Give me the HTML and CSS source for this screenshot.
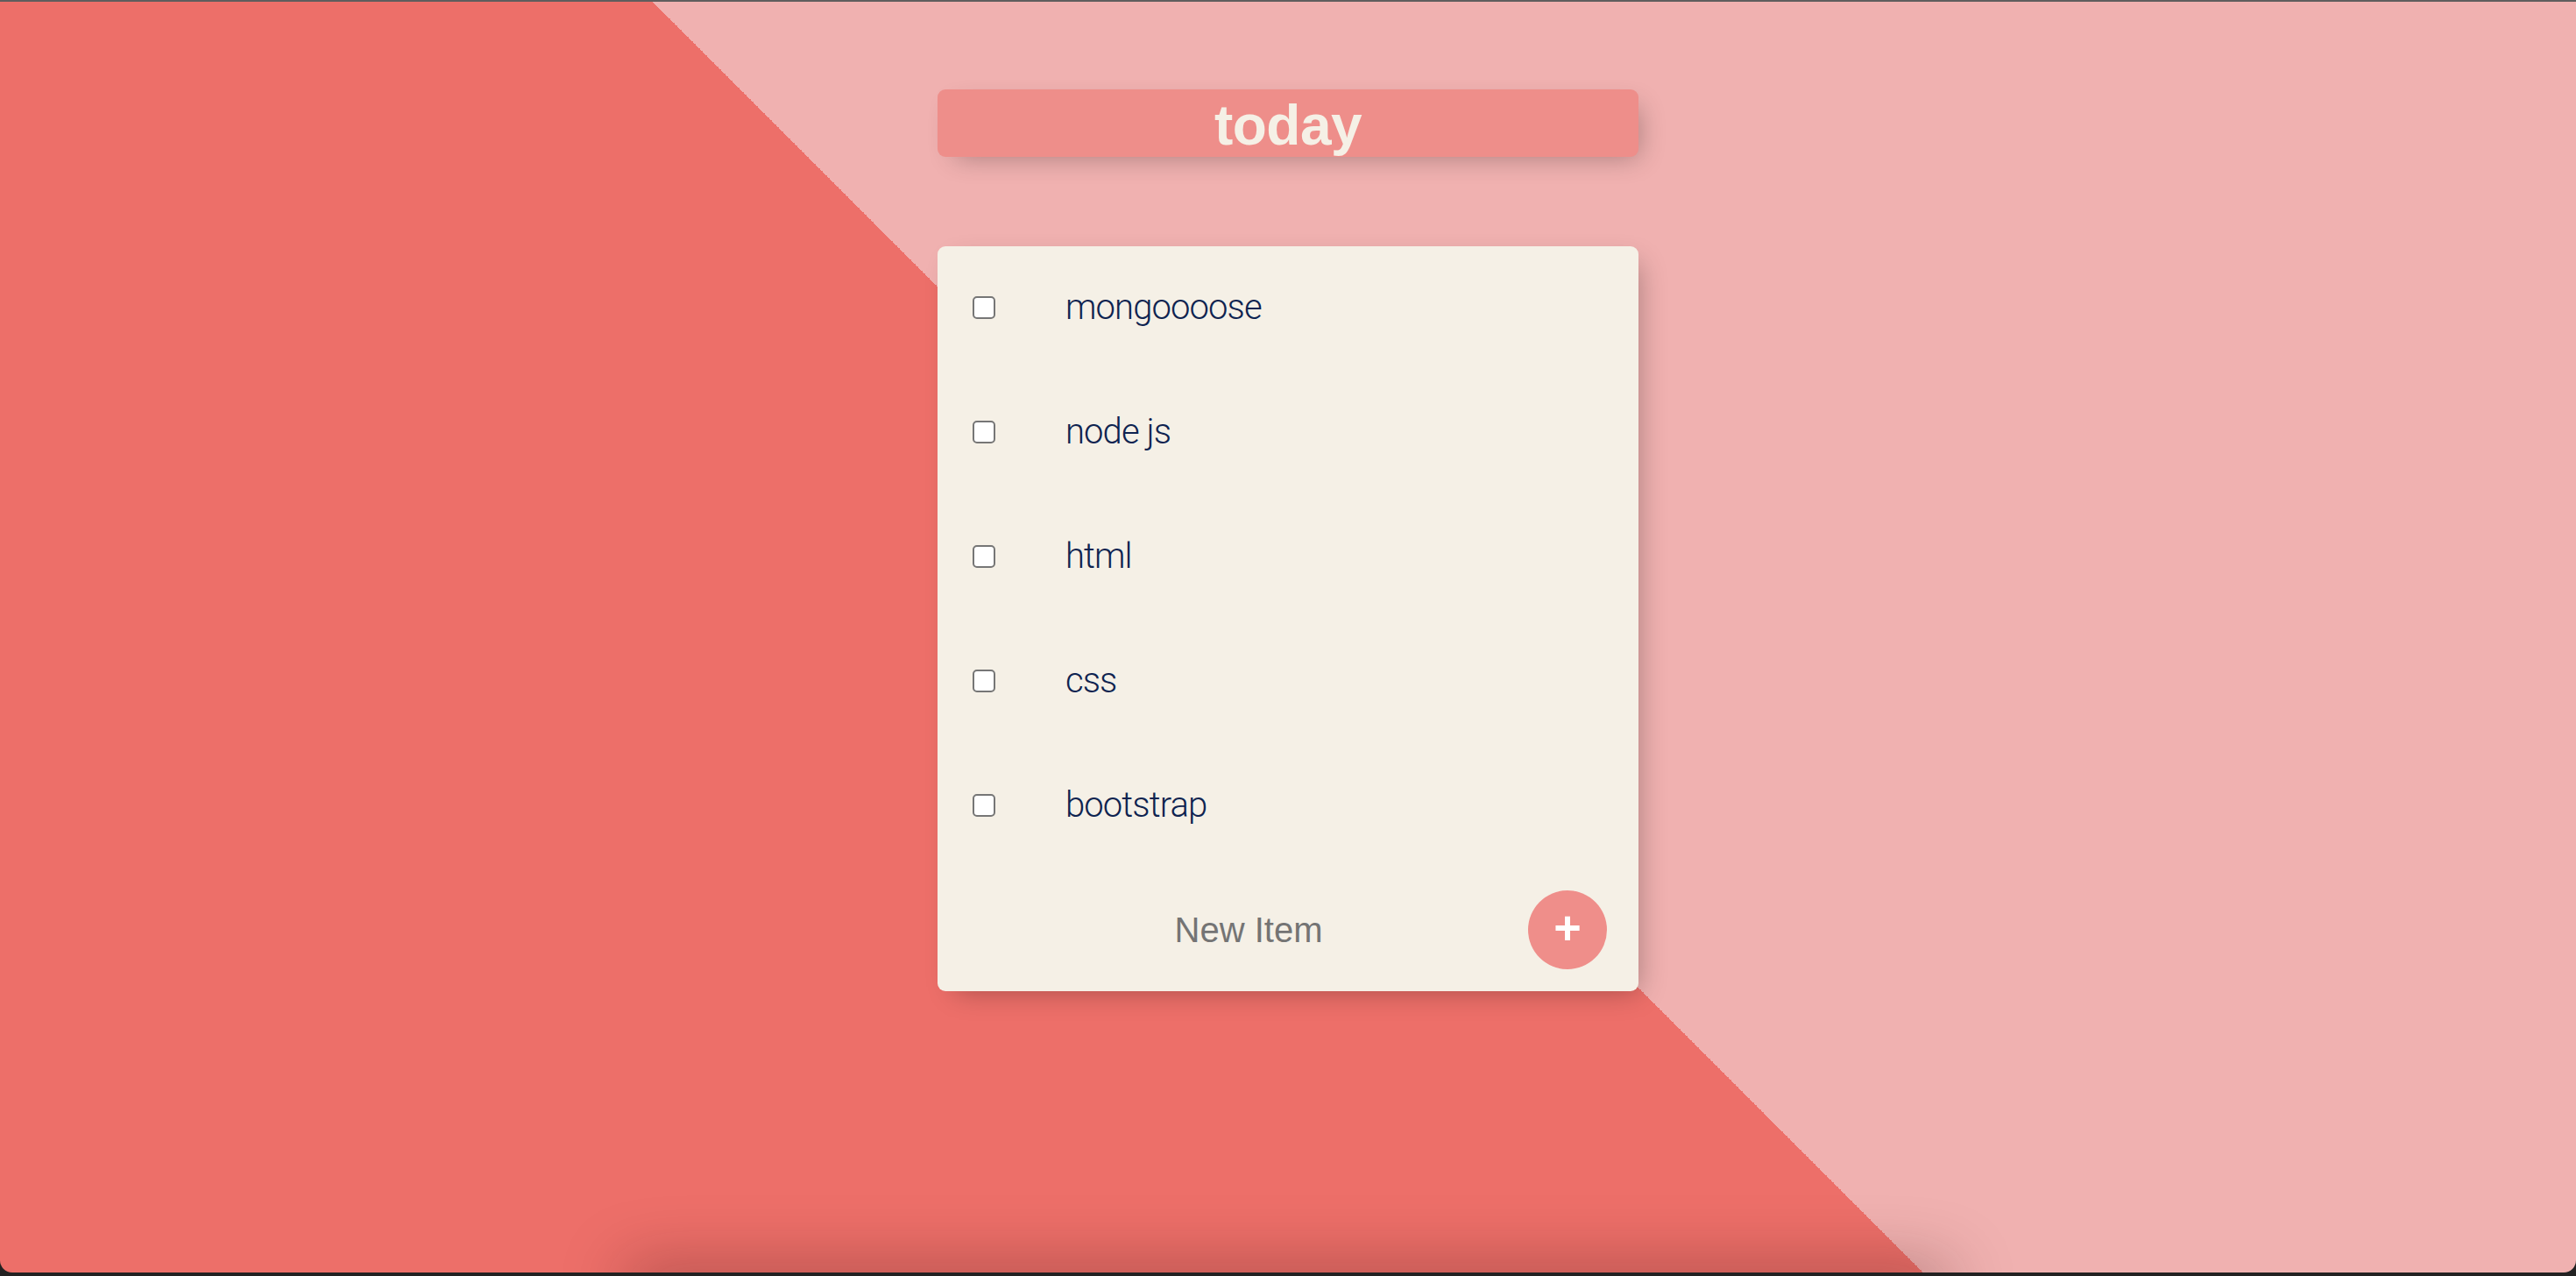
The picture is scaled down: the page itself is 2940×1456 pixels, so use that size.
FILE: index.html
```html
<!DOCTYPE html>
<html lang="en">
<head>
<meta charset="utf-8">
<title>To Do List</title>
<link rel="stylesheet" href="styles.css">
</head>
<body>
<div class="topline"></div>
<div class="window">
  <div class="box heading">
    <h1>today</h1>
  </div>
  <div class="box list">
    <div class="item">
      <input type="checkbox" class="check">
      <p class="label">mongoooose</p>
    </div>
    <div class="item">
      <input type="checkbox" class="check">
      <p class="label">node js</p>
    </div>
    <div class="item">
      <input type="checkbox" class="check">
      <p class="label">html</p>
    </div>
    <div class="item">
      <input type="checkbox" class="check">
      <p class="label">css</p>
    </div>
    <div class="item">
      <input type="checkbox" class="check">
      <p class="label">bootstrap</p>
    </div>
    <form class="item new-item">
      <input type="text" class="new-text" name="newItem" placeholder="New Item" autocomplete="off">
      <button type="button" class="add-btn">+</button>
    </form>
  </div>
  <div class="dock-shadow"></div>
</div>
</body>
</html>
```

FILE: styles.css
```css
html, body {
  margin: 0;
  padding: 0;
  height: 100%;
}

body {
  background: #232222;
  font-family: "Liberation Sans", Arial, sans-serif;
  overflow: hidden;
}

.topline {
  height: 2px;
  background: #5f5d5d;
}

.window {
  position: relative;
  height: 1450px;
  overflow: hidden;
  border-radius: 0 0 14px 14px;
  background: linear-gradient(45deg, #ed6f69 50%, #f0b1b0 50%);
  display: flex;
  flex-direction: column;
  align-items: center;
}

.box {
  width: 800px;
  border-radius: 9px;
  box-shadow: 10px 10px 30px -10px rgba(0, 0, 0, 0.3);
}

.heading {
  margin-top: 100px;
  height: 77px;
  background: #ee8e8a;
  text-align: center;
}

.heading h1 {
  margin: 0;
  padding-top: 5px;
  line-height: 72px;
  font-size: 64px;
  font-weight: 700;
  color: #f5f0e6;
  letter-spacing: -0.5px;
  font-family: "Liberation Sans", Arial, sans-serif;
}

.list {
  margin-top: 102px;
  background: #f5f0e6;
}

.item {
  height: 140px;
  display: flex;
  align-items: center;
  border-bottom: 2px solid transparent;
}

.item.new-item {
  border-bottom: 0;
  margin: 0 0 0 40px;
}

.check {
  -webkit-appearance: none;
  appearance: none;
  width: 26px;
  height: 26px;
  margin: 0 40px;
  box-sizing: border-box;
  border: 2px solid #767676;
  border-radius: 5px;
  background: #ffffff;
  flex: none;
}

.label {
  margin: 0;
  padding: 0 40px;
  font-family: Roboto, "Liberation Sans", sans-serif;
  font-weight: 300;
  font-size: 40px;
  line-height: 40px;
  color: #0e2350;
  letter-spacing: -0.9px;
}

.new-text {
  width: 626px;
  height: 120px;
  box-sizing: border-box;
  padding: 0 0 0 4px;
  margin: 0;
  border: none;
  background: transparent;
  text-align: center;
  font-family: "Liberation Sans", Arial, sans-serif;
  font-size: 40px;
  color: #333;
  outline: none;
}

.new-text::placeholder {
  color: #747474;
  opacity: 1;
}

.add-btn {
  width: 90px;
  height: 90px;
  margin-left: 8px;
  padding: 0 0 6px 0;
  border: 0;
  border-radius: 50%;
  background: #ef8e8a;
  color: #ffffff;
  font-family: "Liberation Sans", Arial, sans-serif;
  font-size: 54px;
  font-weight: 700;
  line-height: 1;
  display: flex;
  align-items: center;
  justify-content: center;
  flex: none;
}

.dock-shadow {
  position: absolute;
  left: 720px;
  width: 1500px;
  bottom: -30px;
  height: 30px;
  border-radius: 20px;
  box-shadow: 0 0 70px 10px rgba(60, 20, 20, 0.35);
}
```
